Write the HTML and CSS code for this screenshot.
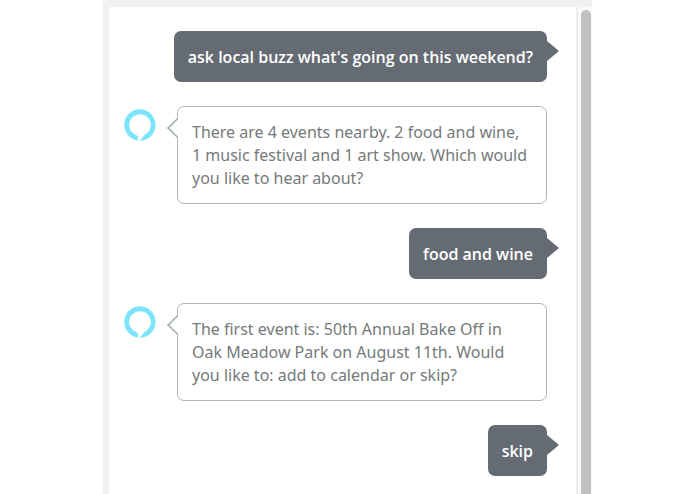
FILE: index.html
```
<!DOCTYPE html>
<html lang="en">

<head>
    <meta charset="utf-8">
    <title>Local Buzz</title>
    <link rel="stylesheet" href="styles.css">
</head>

<body>
    <div class="simulator">
        <main class="chat">
            <div class="row user">
                <p class="bubble">ask local buzz what's going on this weekend?</p>
            </div>

            <div class="row alexa">
                <svg class="logo" viewBox="0 0 32 32" aria-hidden="true">
                    <path d="M14 31.700V28.300Q14 27 12.500 26.200A10.800 10.800 0 0 1 16 5.200A10.800 10.800 0 0 1 20.600 25.770Q18.500 29 15.600 31.800A15.800 15.800 0 0 0 16 0.200A15.800 15.800 0 0 0 14 31.670Z" />
                </svg>
                <p class="bubble">There are 4 events nearby. 2 food and wine,<br>1 music festival and 1 art show. Which would<br>you like to hear about?</p>
            </div>

            <div class="row user">
                <p class="bubble">food and wine</p>
            </div>

            <div class="row alexa">
                <svg class="logo" viewBox="0 0 32 32" aria-hidden="true">
                    <path d="M14 31.700V28.300Q14 27 12.500 26.200A10.800 10.800 0 0 1 16 5.200A10.800 10.800 0 0 1 20.600 25.770Q18.500 29 15.600 31.800A15.800 15.800 0 0 0 16 0.200A15.800 15.800 0 0 0 14 31.670Z" />
                </svg>
                <p class="bubble">The first event is: 50th Annual Bake Off in<br>Oak Meadow Park on August 11th. Would<br>you like to: add to calendar or skip?</p>
            </div>

            <div class="row user">
                <p class="bubble">skip</p>
            </div>
        </main>
        <div class="scrollbar">
            <div class="thumb"></div>
        </div>
    </div>
</body>

</html>
```

FILE: styles.css
```
* {
    box-sizing: border-box;
}

body {
    margin: 0;
    background: #fff;
    font-family: "Noto Sans", "Open Sans", sans-serif;
    font-size: 16px;
    line-height: 23px;
}

.simulator {
    display: flex;
    max-width: 489px;
    min-height: 100vh;
    margin: 0 auto;
    border-top: 7px solid #f1f1f1;
    border-left: 6px solid #f1f1f1;
}

.chat {
    flex: 1;
    display: flex;
    flex-direction: column;
    gap: 24px;
    padding: 24px 29px 16px 15px;
}

.row {
    display: flex;
}

.bubble {
    position: relative;
    margin: 0;
    border-radius: 7px;
}

.user {
    justify-content: flex-end;
}

.user .bubble {
    padding: 15px 14px 13px;
    background: #646b73;
    color: #fff;
    font-family: "Open Sans", "Noto Sans", sans-serif;
    font-weight: 600;
}

/* arrow pointing right */
.user .bubble::after {
    content: "";
    position: absolute;
    top: 10px;
    left: 100%;
    border: 10px solid transparent;
    border-left: 12px solid #646b73;
    border-right: 0;
}

.alexa {
    gap: 21px;
}

.logo {
    flex: none;
    width: 32px;
    height: 32px;
    margin-top: 3px;
    fill: #7de5fb;
}

.alexa .bubble {
    flex: 1;
    padding: 14px 14px 13px;
    border: 1px solid #aab7b8;
    color: #757a7a;
}

/* outlined arrow pointing left */
.alexa .bubble::before {
    content: "";
    position: absolute;
    top: 13px;
    left: -8px;
    width: 14px;
    height: 14px;
    border: 2px solid #aab7b8;
    border-top: 0;
    border-right: 0;
    background: linear-gradient(45deg, #fff 50%, transparent 50%);
    clip-path: polygon(0 0, 100% 100%, 0 100%);
    transform: rotate(45deg);
}

.scrollbar {
    width: 16px;
    padding: 3px 1px 0 3px;
    display: flex;
    border-left: 2px solid #ededed;
    background: #fafafa;
}

.thumb {
    flex: 1;
    border-radius: 5px 5px 0 0;
    background: #c1c1c1;
}
```
